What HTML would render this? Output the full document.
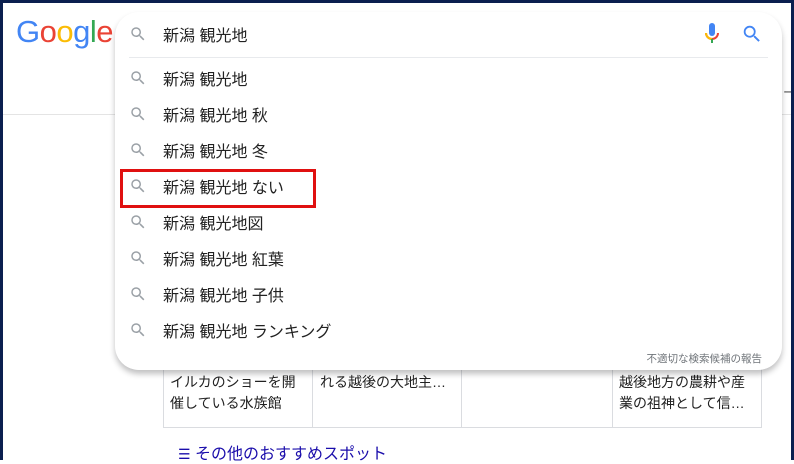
<!DOCTYPE html>
<html><head><meta charset="utf-8"><style>
*{margin:0;padding:0;box-sizing:border-box}
body{width:794px;height:460px;overflow:hidden;background:#fff;font-family:"Liberation Sans","Noto Sans CJK JP",sans-serif;position:relative}
.frame{position:absolute;left:0;top:0;width:794px;height:460px;border:3px solid #0b1f4f;border-bottom:none;z-index:10;pointer-events:none}
.hline{position:absolute;left:3px;right:3px;top:114px;height:1px;background:#e4e4e4}
.logo{position:absolute;left:16px;top:14px;font-size:31px;letter-spacing:-0.5px;font-family:"Liberation Sans",sans-serif}
.drop{position:absolute;left:115px;top:12px;width:667px;height:358px;background:#fff;border-radius:24px;box-shadow:0 4px 6px rgba(32,33,36,.28);z-index:3}
.sep{position:absolute;left:14px;right:14px;top:45px;height:1px;background:#e8eaed}
.row{position:absolute;left:0;height:36px;width:100%;font-size:16px;color:#222;display:flex;align-items:center}
.row svg{position:absolute;left:14px}
.row span{position:absolute;left:48px}
.rep{position:absolute;right:20px;bottom:4px;font-size:10.5px;color:#70757a}
.red{position:absolute;left:120px;top:169px;width:196px;height:39px;border:3px solid #e01010;z-index:5}
.cards{position:absolute;left:163px;top:350px;width:599px;height:78px;border-left:1px solid #dadce0;border-right:1px solid #dadce0;border-bottom:1px solid #dadce0}
.card{position:absolute;top:0;height:77px;font-size:14px;color:#222;line-height:21px;padding:22px 0 0 6px}
.vl{position:absolute;top:0;width:1px;height:77px;background:#dadce0}
.more{position:absolute;left:178px;top:440px;font-size:16px;color:#1a0dab}
</style></head><body>
<div class="frame"></div>
<div class="logo"><span style="color:#4285f4">G</span><span style="color:#ea4335">o</span><span style="color:#fbbc05">o</span><span style="color:#4285f4">g</span><span style="color:#34a853">l</span><span style="color:#ea4335">e</span></div>
<div class="hline"></div>
<div style="position:absolute;left:783px;top:82px;font-size:13px;color:#555">ー</div>
<div class="cards">
<div class="card" style="left:0">イルカのショーを開<br>催している水族館</div>
<div class="vl" style="left:148px"></div>
<div class="card" style="left:150px">れる越後の大地主…</div>
<div class="vl" style="left:297px"></div>
<div class="vl" style="left:448px"></div>
<div class="card" style="left:449px">越後地方の農耕や産<br>業の祖神として信…</div>
</div>
<div class="more"><span style="font-size:14px">☰</span> その他のおすすめスポット</div>
<div class="drop">
<div class="row" style="top:4px"><svg width="18" height="18" viewBox="0 0 24 24"><path fill="#9aa0a6" d="M15.5 14h-.79l-.28-.27A6.47 6.47 0 0 0 16 9.5 6.5 6.5 0 1 0 9.5 16c1.61 0 3.09-.59 4.23-1.57l.27.28v.79l5 4.99L20.49 19l-4.99-5zm-6 0C7.01 14 5 11.99 5 9.5S7.01 5 9.5 5 14 7.01 14 9.5 11.99 14 9.5 14z"/></svg><span>新潟 観光地</span>
<svg style="left:589px" width="16" height="24" viewBox="0 0 16 24"><rect x="5" y="1" width="6" height="13" rx="3" fill="#4285f4"/><path d="M2 11a6 6 0 0 0 12 0" fill="none" stroke="#ea4335" stroke-width="2"/><path d="M2 11a6 6 0 0 0 6 6" fill="none" stroke="#fbbc05" stroke-width="2"/><rect x="7" y="17" width="2" height="4" fill="#34a853"/></svg>
<svg style="left:626px" width="22" height="22" viewBox="0 0 24 24"><path fill="#4285f4" d="M15.5 14h-.79l-.28-.27A6.47 6.47 0 0 0 16 9.5 6.5 6.5 0 1 0 9.5 16c1.61 0 3.09-.59 4.23-1.57l.27.28v.79l5 4.99L20.49 19l-4.99-5zm-6 0C7.01 14 5 11.99 5 9.5S7.01 5 9.5 5 14 7.01 14 9.5 11.99 14 9.5 14z"/></svg></div>
<div class="sep"></div>
<div class="row" style="top:48px"><svg width="18" height="18" viewBox="0 0 24 24"><path fill="#9aa0a6" d="M15.5 14h-.79l-.28-.27A6.47 6.47 0 0 0 16 9.5 6.5 6.5 0 1 0 9.5 16c1.61 0 3.09-.59 4.23-1.57l.27.28v.79l5 4.99L20.49 19l-4.99-5zm-6 0C7.01 14 5 11.99 5 9.5S7.01 5 9.5 5 14 7.01 14 9.5 11.99 14 9.5 14z"/></svg><span>新潟 観光地</span></div>
<div class="row" style="top:84px"><svg width="18" height="18" viewBox="0 0 24 24"><path fill="#9aa0a6" d="M15.5 14h-.79l-.28-.27A6.47 6.47 0 0 0 16 9.5 6.5 6.5 0 1 0 9.5 16c1.61 0 3.09-.59 4.23-1.57l.27.28v.79l5 4.99L20.49 19l-4.99-5zm-6 0C7.01 14 5 11.99 5 9.5S7.01 5 9.5 5 14 7.01 14 9.5 11.99 14 9.5 14z"/></svg><span>新潟 観光地 秋</span></div>
<div class="row" style="top:120px"><svg width="18" height="18" viewBox="0 0 24 24"><path fill="#9aa0a6" d="M15.5 14h-.79l-.28-.27A6.47 6.47 0 0 0 16 9.5 6.5 6.5 0 1 0 9.5 16c1.61 0 3.09-.59 4.23-1.57l.27.28v.79l5 4.99L20.49 19l-4.99-5zm-6 0C7.01 14 5 11.99 5 9.5S7.01 5 9.5 5 14 7.01 14 9.5 11.99 14 9.5 14z"/></svg><span>新潟 観光地 冬</span></div>
<div class="row" style="top:156px"><svg width="18" height="18" viewBox="0 0 24 24"><path fill="#9aa0a6" d="M15.5 14h-.79l-.28-.27A6.47 6.47 0 0 0 16 9.5 6.5 6.5 0 1 0 9.5 16c1.61 0 3.09-.59 4.23-1.57l.27.28v.79l5 4.99L20.49 19l-4.99-5zm-6 0C7.01 14 5 11.99 5 9.5S7.01 5 9.5 5 14 7.01 14 9.5 11.99 14 9.5 14z"/></svg><span>新潟 観光地 ない</span></div>
<div class="row" style="top:192px"><svg width="18" height="18" viewBox="0 0 24 24"><path fill="#9aa0a6" d="M15.5 14h-.79l-.28-.27A6.47 6.47 0 0 0 16 9.5 6.5 6.5 0 1 0 9.5 16c1.61 0 3.09-.59 4.23-1.57l.27.28v.79l5 4.99L20.49 19l-4.99-5zm-6 0C7.01 14 5 11.99 5 9.5S7.01 5 9.5 5 14 7.01 14 9.5 11.99 14 9.5 14z"/></svg><span>新潟 観光地図</span></div>
<div class="row" style="top:228px"><svg width="18" height="18" viewBox="0 0 24 24"><path fill="#9aa0a6" d="M15.5 14h-.79l-.28-.27A6.47 6.47 0 0 0 16 9.5 6.5 6.5 0 1 0 9.5 16c1.61 0 3.09-.59 4.23-1.57l.27.28v.79l5 4.99L20.49 19l-4.99-5zm-6 0C7.01 14 5 11.99 5 9.5S7.01 5 9.5 5 14 7.01 14 9.5 11.99 14 9.5 14z"/></svg><span>新潟 観光地 紅葉</span></div>
<div class="row" style="top:264px"><svg width="18" height="18" viewBox="0 0 24 24"><path fill="#9aa0a6" d="M15.5 14h-.79l-.28-.27A6.47 6.47 0 0 0 16 9.5 6.5 6.5 0 1 0 9.5 16c1.61 0 3.09-.59 4.23-1.57l.27.28v.79l5 4.99L20.49 19l-4.99-5zm-6 0C7.01 14 5 11.99 5 9.5S7.01 5 9.5 5 14 7.01 14 9.5 11.99 14 9.5 14z"/></svg><span>新潟 観光地 子供</span></div>
<div class="row" style="top:300px"><svg width="18" height="18" viewBox="0 0 24 24"><path fill="#9aa0a6" d="M15.5 14h-.79l-.28-.27A6.47 6.47 0 0 0 16 9.5 6.5 6.5 0 1 0 9.5 16c1.61 0 3.09-.59 4.23-1.57l.27.28v.79l5 4.99L20.49 19l-4.99-5zm-6 0C7.01 14 5 11.99 5 9.5S7.01 5 9.5 5 14 7.01 14 9.5 11.99 14 9.5 14z"/></svg><span>新潟 観光地 ランキング</span></div>
<div class="rep">不適切な検索候補の報告</div>
</div>
<div class="red"></div>
</body></html>
